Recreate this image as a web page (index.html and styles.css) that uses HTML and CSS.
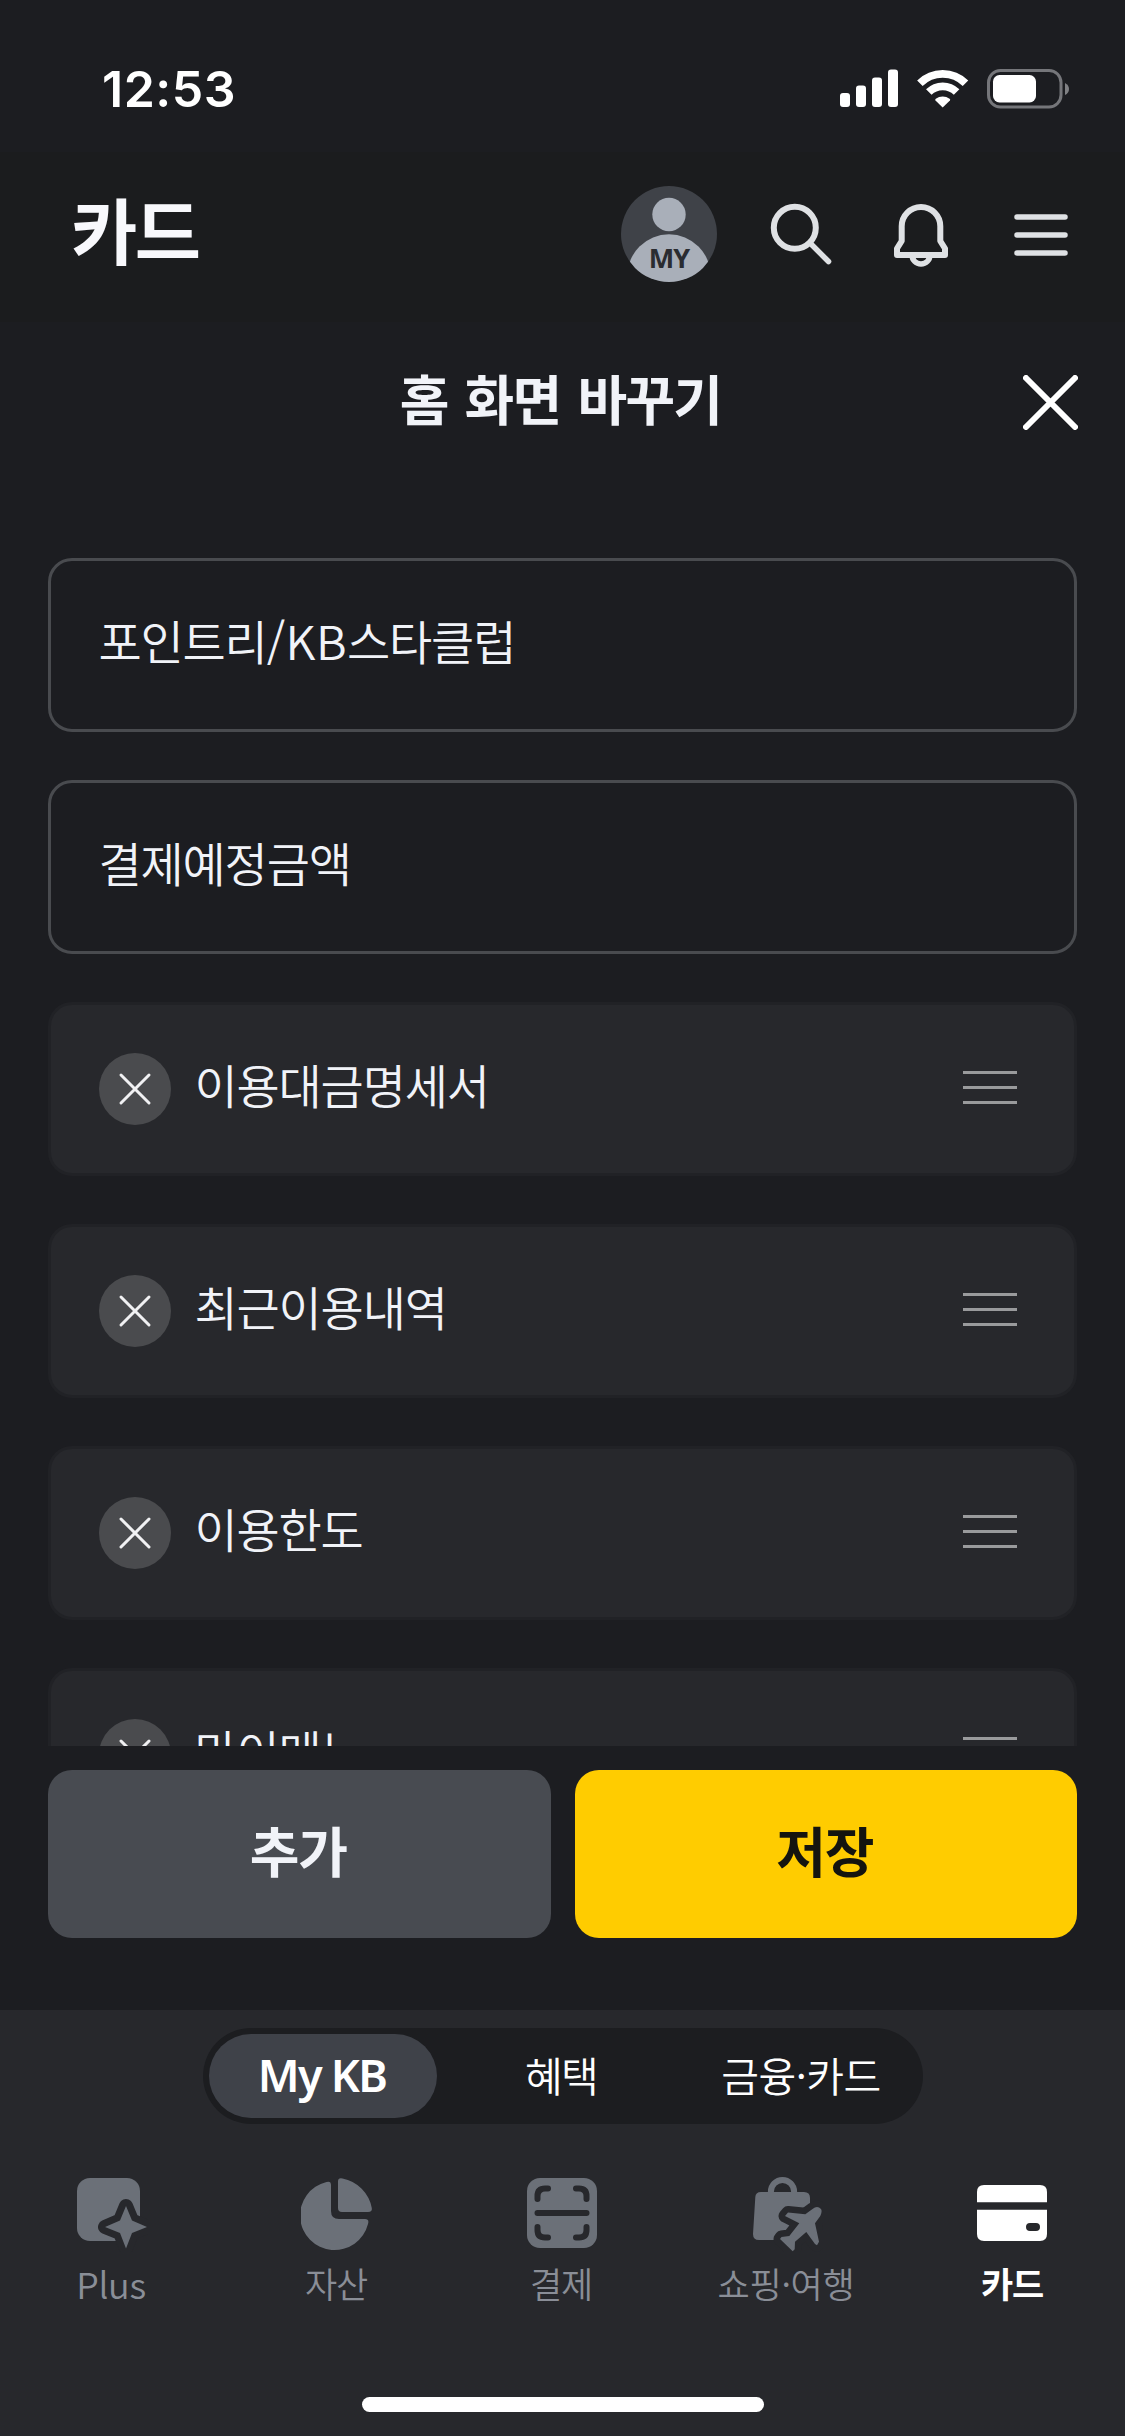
FILE: index.html
```html
<!DOCTYPE html>
<html lang="ko">
<head>
<meta charset="utf-8">
<title>홈 화면 바꾸기</title>
<link rel="stylesheet" href="styles.css">
</head>
<body>
<div class="app">
  <div class="status">
    <span class="time">12:53</span>
    <div class="status-icons">
      <svg width="58" height="38" viewBox="0 0 58 38" fill="#fff"><rect x="0" y="24" width="10" height="14" rx="3"/><rect x="16" y="16.500" width="10" height="21.500" rx="3"/><rect x="32" y="8.500" width="10" height="29.500" rx="3"/><rect x="48" y="0.500" width="10" height="37.500" rx="3"/></svg>
      <svg class="wifi" width="52" height="40" viewBox="0 0 52 40"><g fill="none" stroke="#fff" stroke-width="7.800"><path d="M2.900 14.200A32.300 32.300 0 0 1 48.500 14.200"/><path d="M11.800 23.100A19.600 19.600 0 0 1 39.600 23.100"/></g><path fill="#fff" d="M25.700 38.500 18.500 31.500Q17.800 30.500 18.800 29.700A11.500 11.500 0 0 1 32.600 29.700Q33.600 30.500 32.900 31.500Z"/></svg>
      <svg class="battery" width="83" height="40" viewBox="0 0 83 40"><rect x="1.500" y="1.500" width="72.500" height="36.500" rx="12" fill="none" stroke="#75767a" stroke-width="3"/><rect x="6" y="6" width="43" height="27.500" rx="6.500" fill="#fff"/><path d="M78 14v12q4-2 4-6t-4-6z" fill="#808184"/></svg>
    </div>
  </div>

  <header class="header">
    <h1>카드</h1>
    <div class="tools">
      <div class="avatar">
        <svg width="96" height="96" viewBox="0 0 96 96"><defs><clipPath id="round"><circle cx="48" cy="48" r="48"/></clipPath></defs><g clip-path="url(#round)"><rect width="96" height="96" fill="#3f4248"/><circle cx="48" cy="28.500" r="16.700" fill="#a9afb9"/><circle cx="48" cy="90" r="41.700" fill="#a9afb9"/></g></svg>
        <span>MY</span>
      </div>
      <svg class="search" width="66" height="66" viewBox="0 0 66 66" fill="none" stroke="#dfe1e4" stroke-linecap="round"><circle cx="26.800" cy="25.800" r="21" stroke-width="6"/><path d="M42.500 41.500 60.500 59.500" stroke-width="5.500"/></svg>
      <svg class="bell" width="60" height="68" viewBox="0 0 60 68" fill="none" stroke="#dfe1e4" stroke-width="6" stroke-linejoin="round"><path d="M10.700 25.300a19.300 19.300 0 0 1 38.600 0V40L54 47.500V54H6V47.500L10.700 40Z"/><path d="M21 54a9 9 0 0 0 18 0" stroke-width="5.500"/></svg>
      <svg class="menu" width="54" height="42" viewBox="0 0 54 42" stroke="#dfe1e4" stroke-width="5.500" stroke-linecap="round"><path d="M3 3H51M3 21H51M3 39H51"/></svg>
    </div>
  </header>

  <div class="sheet-title">
    <h2>홈 화면 바꾸기</h2>
    <svg class="close" width="55" height="55" viewBox="0 0 55 55" stroke="#fff" stroke-width="6" stroke-linecap="round"><path d="M3 3 52 52M52 3 3 52"/></svg>
  </div>

  <main class="list">
    <div class="item fixed"><span>포인트리<b>/KB</b>스타클럽</span></div>
    <div class="item fixed"><span>결제예정금액</span></div>
    <div class="item"><svg class="remove" viewBox="0 0 72 72"><circle cx="36" cy="36" r="36"/><path d="M22 22 50 50M50 22 22 50"/></svg><span>이용대금명세서</span><i class="grip"></i></div>
    <div class="item"><svg class="remove" viewBox="0 0 72 72"><circle cx="36" cy="36" r="36"/><path d="M22 22 50 50M50 22 22 50"/></svg><span>최근이용내역</span><i class="grip"></i></div>
    <div class="item"><svg class="remove" viewBox="0 0 72 72"><circle cx="36" cy="36" r="36"/><path d="M22 22 50 50M50 22 22 50"/></svg><span>이용한도</span><i class="grip"></i></div>
    <div class="item"><svg class="remove" viewBox="0 0 72 72"><circle cx="36" cy="36" r="36"/><path d="M22 22 50 50M50 22 22 50"/></svg><span>마이메뉴</span><i class="grip"></i></div>
  </main>

  <div class="actions">
    <button class="btn add"><span>추가</span></button>
    <button class="btn save"><span>저장</span></button>
  </div>

  <footer class="footer">
    <div class="segments">
      <div class="segment active"><span>My KB</span></div>
      <div class="segment benefit"><span>혜택</span></div>
      <div class="segment finance"><span>금융·카드</span></div>
    </div>
    <nav class="tabs">
      <div class="tab">
        <svg viewBox="0 0 72 76"><rect x="1" y="2" width="63" height="63" rx="13"/><path class="cut" stroke-width="14" d="M50 30l6 14.500 15 6.500-15 6-6 15-6-15-15-6 15-6.500z"/><path d="M50 30l6 14.500 15 6.500-15 6-6 15.500-6-15.500-15-6 15-6.500z"/></svg>
        <span class="latin">Plus</span>
      </div>
      <div class="tab">
        <svg viewBox="0 0 72 76"><path d="M25.500 6Q30 4.500 30 9V35Q30 43 38 43H64Q68.500 43 67 48A34.500 34.500 0 1 1 25.500 6Z"/><path d="M37 5.500Q37 1.500 41.500 2.500A37 37 0 0 1 70.800 32Q71.500 36 67 36H41Q37 36 37 32Z"/></svg>
        <span>자산</span>
      </div>
      <div class="tab">
        <svg viewBox="0 0 72 76"><rect x="1" y="2" width="70" height="70" rx="13"/><path class="line" d="M11.500 23V20Q11.500 12.500 19 12.500H22M50 12.500H53Q60.500 12.500 60.500 20V23M11.500 51V54Q11.500 61.500 19 61.500H22M50 61.500H53Q60.500 61.500 60.500 54V51M11.500 37H60.500"/></svg>
        <span>결제</span>
      </div>
      <div class="tab">
        <svg viewBox="0 0 72 76"><circle cx="31.500" cy="15.500" r="11.600" fill="none" stroke="#6b7078" stroke-width="6"/><path d="M10 16H53Q59 16 59 22V27L44 64H8Q2 64 2 58L4.300 21Q4.700 16 10 16Z"/><path class="cut" stroke-width="13" d="M70 33Q66.300 29 61.500 33L54.300 38.300 37 36.500 34 40 48.300 47.300 38.300 60 30.500 61 29 63 41.700 75.300 43.700 73.300 44 65.700 55.300 56 64 68 66 69.300 68 65.700 64 47.300 69.300 40Z"/><path d="M70 33Q66.300 29 61.500 33L54.300 38.300 37 36.500 34 40 48.300 47.300 38.300 60 30.500 61 29 63 41.700 75.300 43.700 73.300 44 65.700 55.300 56 64 68 66 69.300 68 65.700 64 47.300 69.300 40Q71.500 35 70 33Z"/></svg>
        <span class="wide">쇼핑·여행</span>
      </div>
      <div class="tab on">
        <svg viewBox="0 0 72 76"><path fill-rule="evenodd" d="M8 9H64Q71 9 71 16V26.300H1V16Q1 9 8 9ZM1 33.700H71V58Q71 65 64 65H8Q1 65 1 58ZM54 47A4 4 0 0 0 54 55H60A4 4 0 0 0 60 47Z"/></svg>
        <span>카드</span>
      </div>
    </nav>
    <div class="home-bar"></div>
  </footer>
</div>
</body>
</html>
```
FILE: styles.css
```css
* { box-sizing: border-box; }

body {
  margin: 0;
  background: #1c1d21;
  color: #f1f3f8;
  font-family: "Noto Sans CJK KR", "Noto Sans", sans-serif;
}

h1, h2 { margin: 0; font-weight: 700; }
svg { display: block; flex: none; }

.app {
  width: 1125px;
  height: 2436px;
  overflow: hidden;
  display: flex;
  flex-direction: column;
}

/* Status bar */
.status {
  height: 152px;
  flex: none;
  display: flex;
  justify-content: space-between;
  padding: 58px 55px 0 102px;
}
.time {
  font: 600 50px/62px Inter, sans-serif;
  letter-spacing: 0.5px;
  color: #fff;
}
.status-icons { display: flex; padding-top: 11px; }
.wifi { margin-left: 19px; }
.battery { margin-left: 18px; }

/* App header */
.header {
  height: 170px;
  flex: none;
  background: #1b1c1e;
  display: flex;
  justify-content: space-between;
  padding: 0 57px 0 71px;
}
.header h1 {
  font-size: 72px;
  line-height: 80px;
  letter-spacing: -2.5px;
  color: #f8f8fc;
  padding-top: 36px;
}
.tools { display: flex; }
.avatar {
  display: grid;
  width: 96px;
  height: 96px;
  margin-top: 34px;
}
.avatar > * { grid-area: 1 / 1; }
.avatar span {
  font: 700 27px/30px "Noto Sans", sans-serif;
  letter-spacing: -1px;
  color: #2a2c31;
  text-align: center;
  padding-top: 57px;
}
.search { margin: 50px 0 0 51px; }
.bell { margin: 49px 0 0 57px; }
.menu { margin: 62px 0 0 63px; }

/* Sheet title */
.sheet-title {
  height: 236px;
  flex: none;
  display: grid;
  grid-template-columns: 1fr auto 1fr;
  padding: 0 47.5px;
}
.sheet-title h2 {
  grid-column: 2;
  font-size: 54px;
  line-height: 72px;
  letter-spacing: -1.7px;
  word-spacing: 3.5px;
  padding: 40px 4px 0 0;
}
.close { justify-self: end; margin-top: 53px; }

/* Menu list */
.list {
  height: 1188px;
  flex: none;
  overflow: hidden;
  padding: 0 48px;
  display: flex;
  flex-direction: column;
  gap: 48px;
}
.item {
  height: 174px;
  flex: none;
  display: flex;
  align-items: center;
  gap: 24px;
  padding: 0 57px 0 48px;
  border: 3px solid #212226;
  border-radius: 24px;
  background: #27282c;
}
.item.fixed { background: none; border-color: #494b4f; }
.item span {
  font-size: 47px;
  font-weight: 350;
  line-height: 60px;
  letter-spacing: -1.2px;
  padding-bottom: 10px;
  margin-left: -0.5px;
}
.item b { font-weight: inherit; letter-spacing: 0.4px; }
.remove { width: 72px; height: 72px; fill: #4a4b4e; }
.remove path { stroke: #f1f1f3; stroke-width: 3; stroke-linecap: round; }
.grip {
  width: 54px;
  height: 33px;
  margin-left: auto;
  margin-bottom: 3px;
  background: repeating-linear-gradient(#999a9c 0 3px, transparent 3px 15px);
}

/* Bottom actions */
.actions {
  height: 264px;
  flex: none;
  padding: 24px 48px 0;
  display: grid;
  grid-template-columns: 1fr 1fr;
  gap: 24px;
}
.btn {
  height: 168px;
  border: 0;
  border-radius: 24px;
  font: 700 54px/72px "Noto Sans CJK KR", sans-serif;
  letter-spacing: -1.2px;
}
.btn span { display: block; padding: 0 2px 8px 0; }
.add { background: #484b51; color: #f1f3f8; }
.save { background: #ffcc00; color: #14140f; }

/* Footer */
.footer {
  flex: 1;
  background: #27282c;
  padding-top: 18px;
  display: flex;
  flex-direction: column;
  align-items: center;
}
.segments {
  width: 720px;
  height: 96px;
  flex: none;
  padding: 6px;
  display: flex;
  border-radius: 48px;
  background: #1c1d20;
}
.segment {
  display: flex;
  align-items: center;
  justify-content: center;
  border-radius: 42px;
  color: #fff;
  font-size: 41px;
  line-height: 60px;
  letter-spacing: -1.6px;
  font-weight: 350;
}
.segment span { padding-bottom: 4px; }
.segment.active {
  width: 228px;
  background: #3f4249;
  font-family: "Noto Sans", sans-serif;
  font-size: 45px;
  font-weight: 600;
  letter-spacing: -1.7px;
}
.segment.active span { padding: 0 1px 3px 0; }
.benefit { width: 249px; }
.finance { width: 231px; letter-spacing: -0.5px; }

.tabs {
  width: 1125px;
  padding-top: 52px;
  display: grid;
  grid-template-columns: repeat(5, 1fr);
}
.tab {
  display: flex;
  flex-direction: column;
  align-items: center;
  color: #8a8e97;
  fill: #6b7078;
  font-size: 35px;
  line-height: 44px;
  letter-spacing: -1.2px;
  font-weight: 350;
}
.tab svg { width: 72px; height: 76px; margin-right: 1px; }
.tab span { margin-top: 9px; padding-right: 3px; }
.tab .latin { font-size: 36px; letter-spacing: -0.4px; }
.tab .wide { letter-spacing: -0.3px; }
.tab .cut { fill: #27282c; stroke: #27282c; stroke-linejoin: round; }
.tab .line { fill: none; stroke: #27282c; stroke-width: 6; stroke-linecap: round; }
.tab.on { color: #fff; fill: #fff; font-weight: 700; }
.tab.on span { padding-right: 1px; }

.home-bar {
  width: 402px;
  height: 15px;
  margin: auto 0 24px;
  border-radius: 8px;
  background: #fff;
}
```
